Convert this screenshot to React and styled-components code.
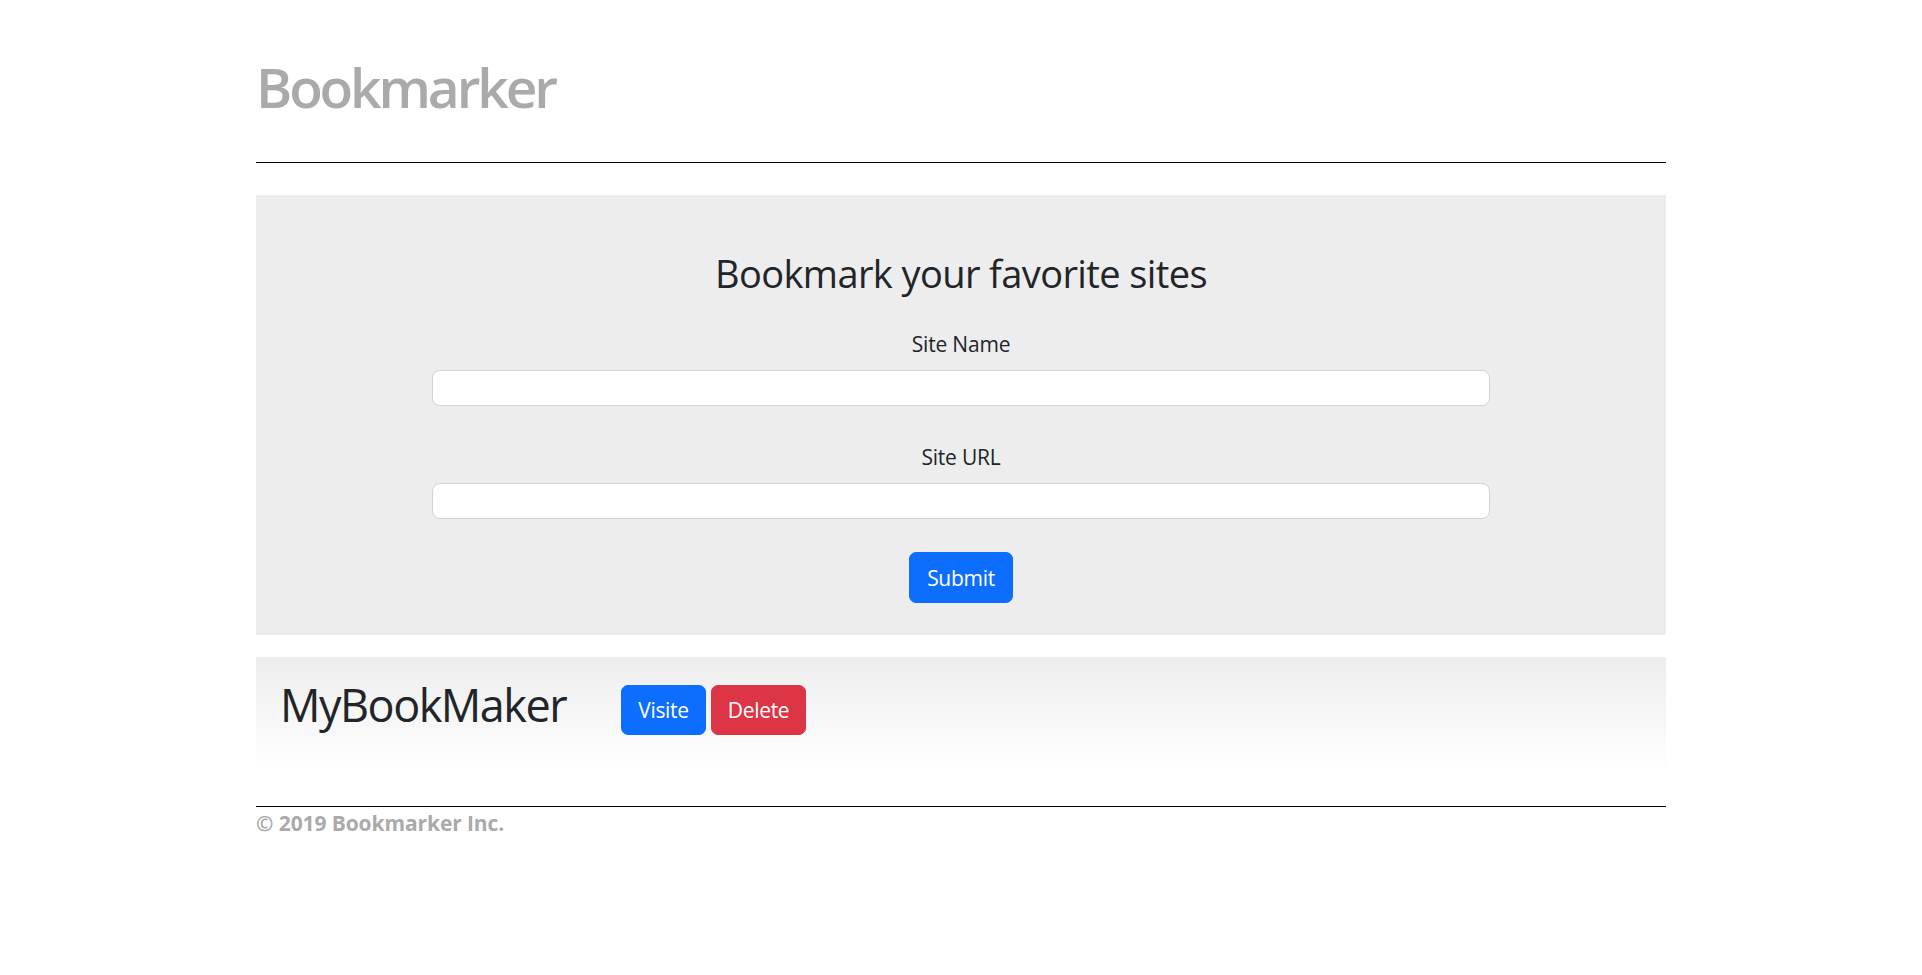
import React from "react";
import styled, { createGlobalStyle } from "styled-components";

const GlobalStyle = createGlobalStyle`
  * {
    box-sizing: border-box;
  }

  body {
    margin: 0;
    background: #fff;
    color: #212529;
    font-family: "Open Sans", "Noto Sans", sans-serif;
  }
`;

export default function App() {
  return (
    <>
      <GlobalStyle />
      <Page>
        <Header>
          <Title>Bookmarker</Title>
        </Header>
        <Rule />
        <Jumbo>
          <Heading>Bookmark your favorite sites</Heading>
          <Label htmlFor="siteName">Site Name</Label>
          <Input id="siteName" type="text" />
          <Label htmlFor="siteUrl" $spaced>
            Site URL
          </Label>
          <Input id="siteUrl" type="text" />
          <SubmitButton type="button">Submit</SubmitButton>
        </Jumbo>
        <Bookmark>
          <Name>MyBookMaker</Name>
          <Button $color="#0d6efd">Visite</Button>
          <Button $color="#dc3545">Delete</Button>
        </Bookmark>
        <Rule $footer />
        <Footer>© 2019 Bookmarker Inc.</Footer>
      </Page>
    </>
  );
}

const Page = styled.div`
  width: 1410px;
  margin: 0 auto;
`;

const Header = styled.header`
  padding-top: 53px;
`;

const Title = styled.h1`
  margin: 0;
  font-size: 55px;
  line-height: 67px;
  font-weight: 600;
  letter-spacing: -3.1px;
  color: #aaaaaa;
`;

const Rule = styled.div`
  height: 1px;
  background: #000;
  margin-top: ${(p) => (p.$footer ? "33px" : "42px")};
`;

const Jumbo = styled.section`
  margin-top: 32px;
  height: 440px;
  padding-top: 55px;
  background: #ededed;
  display: flex;
  flex-direction: column;
  align-items: center;
`;

const Heading = styled.h2`
  margin: 0;
  font-size: 38px;
  line-height: 46px;
  font-weight: 400;
  letter-spacing: -0.6px;
`;

const Label = styled.label`
  margin-top: ${(p) => (p.$spaced ? "35px" : "32px")};
  font-size: 21px;
  line-height: 32px;
  letter-spacing: -0.2px;
`;

const Input = styled.input`
  width: 75%;
  height: 36px;
  margin-top: 10px;
  border: 1px solid #ced4da;
  border-radius: 8px;
  background: #fff;
  font: inherit;
  font-size: 20px;
  padding: 0 15px;

  &:focus {
    outline: none;
  }
`;

const Button = styled.button`
  height: 50px;
  padding: 0 16px;
  border: 1px solid ${(p) => p.$color};
  border-radius: 7px;
  background: ${(p) => p.$color};
  color: #fff;
  font-family: inherit;
  font-size: 21px;
  letter-spacing: -0.3px;
  cursor: pointer;

  & + & {
    margin-left: 5px;
  }
`;

const SubmitButton = styled(Button)`
  margin-top: 33px;
  height: 51px;
  padding: 0 17px;
  border-color: #0d6efd;
  background: #0d6efd;
`;

const Bookmark = styled.div`
  margin-top: 22px;
  height: 116px;
  padding: 28px 0 0 24px;
  display: flex;
  align-items: flex-start;
  background: linear-gradient(to bottom, #ededed, #ffffff);
`;

const Name = styled.h2`
  margin: -7px 55px 0 0;
  font-size: 45px;
  line-height: 54px;
  font-weight: 400;
  letter-spacing: -1.5px;
`;

const Footer = styled.footer`
  font-size: 21px;
  line-height: 32px;
  font-weight: 700;
  letter-spacing: -0.1px;
  color: #aaaaaa;
`;
